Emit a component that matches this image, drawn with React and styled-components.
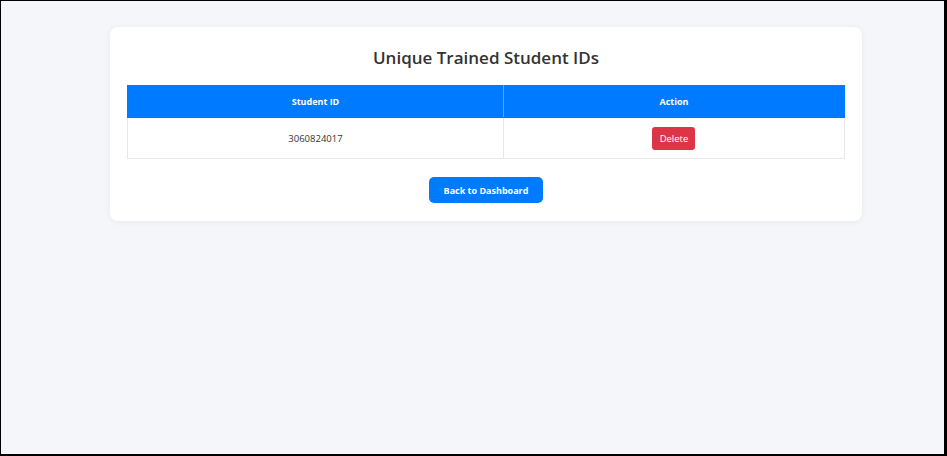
import styled, { createGlobalStyle } from "styled-components";

const GlobalStyle = createGlobalStyle`
  html, body {
    margin: 0;
    padding: 0;
    background: #000;
  }
  body {
    font-family: "Open Sans", "Noto Sans", Arial, sans-serif;
  }
`;

const Frame = styled.div`
  margin: 1px 3px 2px 1px;
  height: calc(100vh - 3px);
  background-color: #f5f6fa;
  box-sizing: border-box;
  padding-top: 26px;
`;

const Card = styled.div`
  width: 752px;
  margin-left: 109px;
  background: #ffffff;
  border-radius: 8px;
  box-shadow: 0 1px 6px rgba(0, 0, 0, 0.06);
  padding: 15px 17px 18px;
  box-sizing: border-box;
  display: flex;
  flex-direction: column;
  align-items: center;
`;

const Title = styled.h2`
  margin: 0 0 12px;
  font-size: 17px;
  font-weight: 600;
  color: #333333;
  line-height: 31px;
`;

const Table = styled.table`
  width: 100%;
  table-layout: fixed;
  border-collapse: collapse;
  font-size: 9.5px;
`;

const HeadCell = styled.th`
  width: ${({ $last }) => ($last ? "auto" : "52.3%")};
  background-color: #007bff;
  color: #ffffff;
  font-weight: 700;
  font-size: 9px;
  height: 31px;
  padding: 0;
  border: 1px solid #007bff;
  border-right: ${({ $last }) => ($last ? "1px solid #007bff" : "1px solid #5aa8ff")};
`;

const Cell = styled.td`
  height: 40px;
  padding: 0;
  text-align: center;
  color: #333333;
  border: 1px solid #e6e8eb;
`;

const DeleteButton = styled.button`
  background-color: #dc3545;
  color: #ffffff;
  border: none;
  border-radius: 3px;
  width: 43px;
  height: 23px;
  font-family: "Open Sans", "Noto Sans", Arial, sans-serif;
  font-size: 9.5px;
  padding: 0;
  cursor: pointer;
`;

const BackButton = styled.button`
  margin-top: 18px;
  background-color: #007bff;
  color: #ffffff;
  border: none;
  border-radius: 5px;
  width: 114px;
  height: 26px;
  font-family: "Open Sans", "Noto Sans", Arial, sans-serif;
  font-weight: 700;
  font-size: 9px;
  cursor: pointer;
`;

const rows = ["3060824017"];

export default function App() {
  return (
    <>
      <GlobalStyle />
      <Frame>
        <Card>
          <Title>Unique Trained Student IDs</Title>
          <Table>
            <thead>
              <tr>
                <HeadCell>Student ID</HeadCell>
                <HeadCell $last>Action</HeadCell>
              </tr>
            </thead>
            <tbody>
              {rows.map((id) => (
                <tr key={id}>
                  <Cell>{id}</Cell>
                  <Cell>
                    <DeleteButton>Delete</DeleteButton>
                  </Cell>
                </tr>
              ))}
            </tbody>
          </Table>
          <BackButton>Back to Dashboard</BackButton>
        </Card>
      </Frame>
    </>
  );
}
